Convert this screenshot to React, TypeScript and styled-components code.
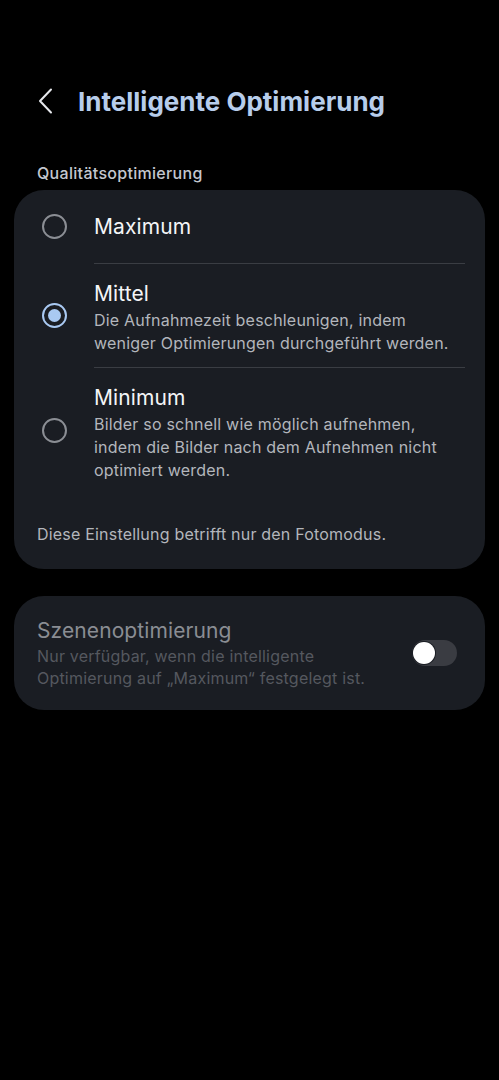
import React, { useState } from 'react';
import styled, { createGlobalStyle } from 'styled-components';

const GlobalStyle = createGlobalStyle`
    html, body {
        margin: 0;
        padding: 0;
        background: #000;
    }
    body {
        font-family: Inter, Roboto, "Noto Sans", sans-serif;
        -webkit-font-smoothing: antialiased;
    }
`;

type Level = 'max' | 'mid' | 'min';

interface OptionData {
    id: Level;
    title: string;
    description?: string;
}

const options: OptionData[] = [
    { id: 'max', title: 'Maximum' },
    {
        id: 'mid',
        title: 'Mittel',
        description: 'Die Aufnahmezeit beschleunigen, indem weniger Optimierungen durchgeführt werden.',
    },
    {
        id: 'min',
        title: 'Minimum',
        description: 'Bilder so schnell wie möglich aufnehmen, indem die Bilder nach dem Aufnehmen nicht optimiert werden.',
    },
];

const App: React.FC = () => {
    const [level, setLevel] = useState<Level>('mid');
    const [scene, setScene] = useState(false);

    return (
        <Page>
            <GlobalStyle />
            <Header>
                <BackButton aria-label="Zurück">
                    <svg width="16" height="26" viewBox="0 0 16 26" fill="none">
                        <path d="M13 1.5L2 13L13 24.5" stroke="#e6e8ec" strokeWidth="2" strokeLinecap="round" strokeLinejoin="round" />
                    </svg>
                </BackButton>
                <Title>Intelligente Optimierung</Title>
            </Header>

            <SectionLabel>Qualitätsoptimierung</SectionLabel>

            <Card>
                {options.map((opt, i) => (
                    <OptionRow key={opt.id} onClick={() => setLevel(opt.id)}>
                        <RadioCell>
                            <Radio checked={level === opt.id} />
                        </RadioCell>
                        <OptionBody divider={i > 0}>
                            <OptionTitle>{opt.title}</OptionTitle>
                            {opt.description && <OptionDesc>{opt.description}</OptionDesc>}
                        </OptionBody>
                    </OptionRow>
                ))}
                <Footnote>Diese Einstellung betrifft nur den Fotomodus.</Footnote>
            </Card>

            <SceneCard>
                <SceneText>
                    <SceneTitle>Szenenoptimierung</SceneTitle>
                    <SceneDesc>
                        Nur verfügbar, wenn die intelligente Optimierung auf „Maximum“ festgelegt ist.
                    </SceneDesc>
                </SceneText>
                <Toggle on={scene} onClick={() => setScene(!scene)} aria-label="Szenenoptimierung" />
            </SceneCard>
        </Page>
    );
};

export default App;

const Page = styled.div`
    width: 499px;
    min-height: 1080px;
    background: #000;
    box-sizing: border-box;
    padding: 0 14px;
`;

const Header = styled.div`
    display: flex;
    align-items: center;
    height: 60px;
    padding: 71px 0 1px 24px;
`;

const BackButton = styled.button`
    display: flex;
    align-items: center;
    justify-content: center;
    background: none;
    border: none;
    padding: 0;
    width: 16px;
    height: 26px;
    margin-right: 24px;
    cursor: pointer;
`;

const Title = styled.h1`
    margin: 0;
    font-size: 26px;
    font-weight: 700;
    color: #b7cdeb;
    letter-spacing: 0;
`;

const SectionLabel = styled.div`
    padding: 31px 0 0 23px;
    height: 27px;
    font-size: 16px;
    font-weight: 500;
    color: #c3c7cf;
    letter-spacing: 0.3px;
`;

const Card = styled.div`
    background: #1a1d23;
    border-radius: 30px;
    padding: 0 20px 24px 0;
`;

const OptionRow = styled.div`
    display: flex;
    align-items: stretch;
    cursor: pointer;
`;

const RadioCell = styled.div`
    width: 80px;
    display: flex;
    align-items: center;
    justify-content: center;
    flex-shrink: 0;
`;

const Radio = styled.span<{ checked: boolean }>`
    width: 21px;
    height: 21px;
    border-radius: 50%;
    border: 2px solid ${(p) => (p.checked ? '#a9c9f2' : '#8b8e94')};
    display: flex;
    align-items: center;
    justify-content: center;

    &::after {
        content: '';
        width: 13px;
        height: 13px;
        border-radius: 50%;
        background: #a9c9f2;
        display: ${(p) => (p.checked ? 'block' : 'none')};
    }
`;

const OptionBody = styled.div<{ divider: boolean }>`
    flex: 1;
    border-top: ${(p) => (p.divider ? '1px solid #3a3d43' : 'none')};
    padding: ${(p) => (p.divider ? '16px 0 12px' : '23px 0 22px')};
`;

const OptionTitle = styled.div`
    font-size: 21px;
    color: #f4f5f7;
    line-height: 28px;
    letter-spacing: 0.1px;
`;

const OptionDesc = styled.div`
    font-size: 16px;
    color: #b3b6bc;
    line-height: 23px;
    margin-top: 1px;
    padding-right: 10px;
    letter-spacing: 0.2px;
`;

const Footnote = styled.div`
    padding: 29px 0 0 23px;
    font-size: 16px;
    color: #b3b6bc;
    line-height: 22px;
    letter-spacing: 0.2px;
`;

const SceneCard = styled.div`
    margin-top: 27px;
    background: #1a1d23;
    border-radius: 30px;
    display: flex;
    align-items: center;
    padding: 21px 28px 21px 23px;
`;

const SceneText = styled.div`
    flex: 1;
`;

const SceneTitle = styled.div`
    font-size: 21px;
    color: #8a8d93;
    line-height: 28px;
    letter-spacing: 0.1px;
`;

const SceneDesc = styled.div`
    font-size: 16px;
    color: #55585f;
    line-height: 22px;
    max-width: 340px;
    letter-spacing: 0.2px;
`;

const Toggle = styled.button<{ on: boolean }>`
    position: relative;
    width: 45px;
    height: 26px;
    border-radius: 13px;
    border: none;
    padding: 0;
    background: ${(p) => (p.on ? '#a9c9f2' : '#3a3c42')};
    cursor: pointer;
    flex-shrink: 0;

    &::after {
        content: '';
        position: absolute;
        top: 2px;
        left: ${(p) => (p.on ? '21px' : '1px')};
        width: 22px;
        height: 22px;
        border-radius: 50%;
        background: #fff;
        box-shadow: 0 0 0 1px #1a1d23;
    }
`;
